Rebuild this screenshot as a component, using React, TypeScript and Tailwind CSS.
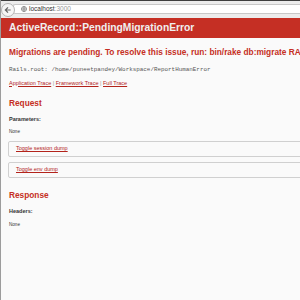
import React from 'react';

const sans = "font-['Liberation_Sans',Arial,sans-serif]";
const mono = "font-['Liberation_Mono','Courier_New',monospace]";

const Details = ({ label, className }: { label: string; className: string }) => (
  <div className={`${className} ml-[-1px] mr-[-40px] h-[16px] border border-[#d0d0d0] rounded-[2px] flex items-center pl-[7px]`}>
    <a className="text-[5.5px] leading-[7px] text-[#b3231b] underline">{label}</a>
  </div>
);

export default function App() {
  return (
    <div className={`w-[300px] h-[300px] overflow-hidden bg-[#fafafa] border-l border-[#9c9c9c] flex flex-col text-[#333] ${sans}`}>
      {/* browser chrome */}
      <div className="h-[18px] shrink-0 bg-[#ececec] border-t border-[#3e3e3e] relative">
        <div className="absolute left-[12px] right-0 top-[3px] h-[10px] bg-white border border-[#c8c8c8] border-r-0 rounded-l-[2px] flex items-center pl-[7px] gap-[2px]">
          <svg width="6" height="6" viewBox="0 0 12 12" className="shrink-0">
            <circle cx="6" cy="6" r="5" fill="none" stroke="#777" strokeWidth="1.6" />
            <path d="M1 6h10M6 1c-2 3-2 7 0 10M6 1c2 3 2 7 0 10" fill="none" stroke="#777" strokeWidth="1.2" />
          </svg>
          <span className="text-[6.5px] leading-[8px] text-[#333]">
            localhost<span className="text-[#999]">:3000</span>
          </span>
        </div>
        <div className="absolute left-[0px] top-[2px] w-[14px] h-[14px] rounded-full bg-[#f6f6f6] border border-[#b4b4b4] flex items-center justify-center">
          <svg width="8" height="8" viewBox="0 0 12 12">
            <path d="M10 6H2.5M6 2L2 6l4 4" fill="none" stroke="#666" strokeWidth="1.8" />
          </svg>
        </div>
      </div>

      {/* red header */}
      <div className="h-[20px] shrink-0 bg-[#c52f24] pl-[8px] flex items-center whitespace-nowrap">
        <h1 className="text-[10.3px] leading-[12px] font-bold text-[#f0f0f0]">ActiveRecord::PendingMigrationError</h1>
      </div>

      <div className="pl-[8px] flex flex-col">
        <h2 className="mt-[9px] text-[8.3px] leading-[10px] font-bold text-[#c52f24] whitespace-nowrap overflow-hidden">
          Migrations are pending. To resolve this issue, run: bin/rake db:migrate RAILS_ENV=development
        </h2>
        <p className={`mt-[8.5px] text-[5.9px] leading-[8px] text-[#555] ${mono}`}>
          Rails.root: /home/puneetpandey/Workspace/ReportHumanError
        </p>
        <p className="mt-[5px] text-[5.5px] leading-[8px] text-[#999]">
          <a className="text-[#b3231b] underline">Application Trace</a> |{' '}
          <a className="text-[#b3231b] underline">Framework Trace</a> |{' '}
          <a className="text-[#b3231b] underline">Full Trace</a>
        </p>

        <h2 className="mt-[11.5px] text-[8.3px] leading-[10px] font-bold text-[#c52f24]">Request</h2>
        <p className="mt-[7.5px] text-[5.5px] leading-[7px] font-bold">Parameters:</p>
        <p className="mt-[6.8px] text-[4.6px] leading-[6px]">None</p>

        <Details label="Toggle session dump" className="mt-[5.6px]" />
        <Details label="Toggle env dump" className="mt-[5px]" />

        <h2 className="mt-[12px] text-[8.3px] leading-[10px] font-bold text-[#c52f24]">Response</h2>
        <p className="mt-[8px] text-[5.5px] leading-[7px] font-bold">Headers:</p>
        <p className="mt-[7px] text-[4.6px] leading-[6px]">None</p>
      </div>
    </div>
  );
}
